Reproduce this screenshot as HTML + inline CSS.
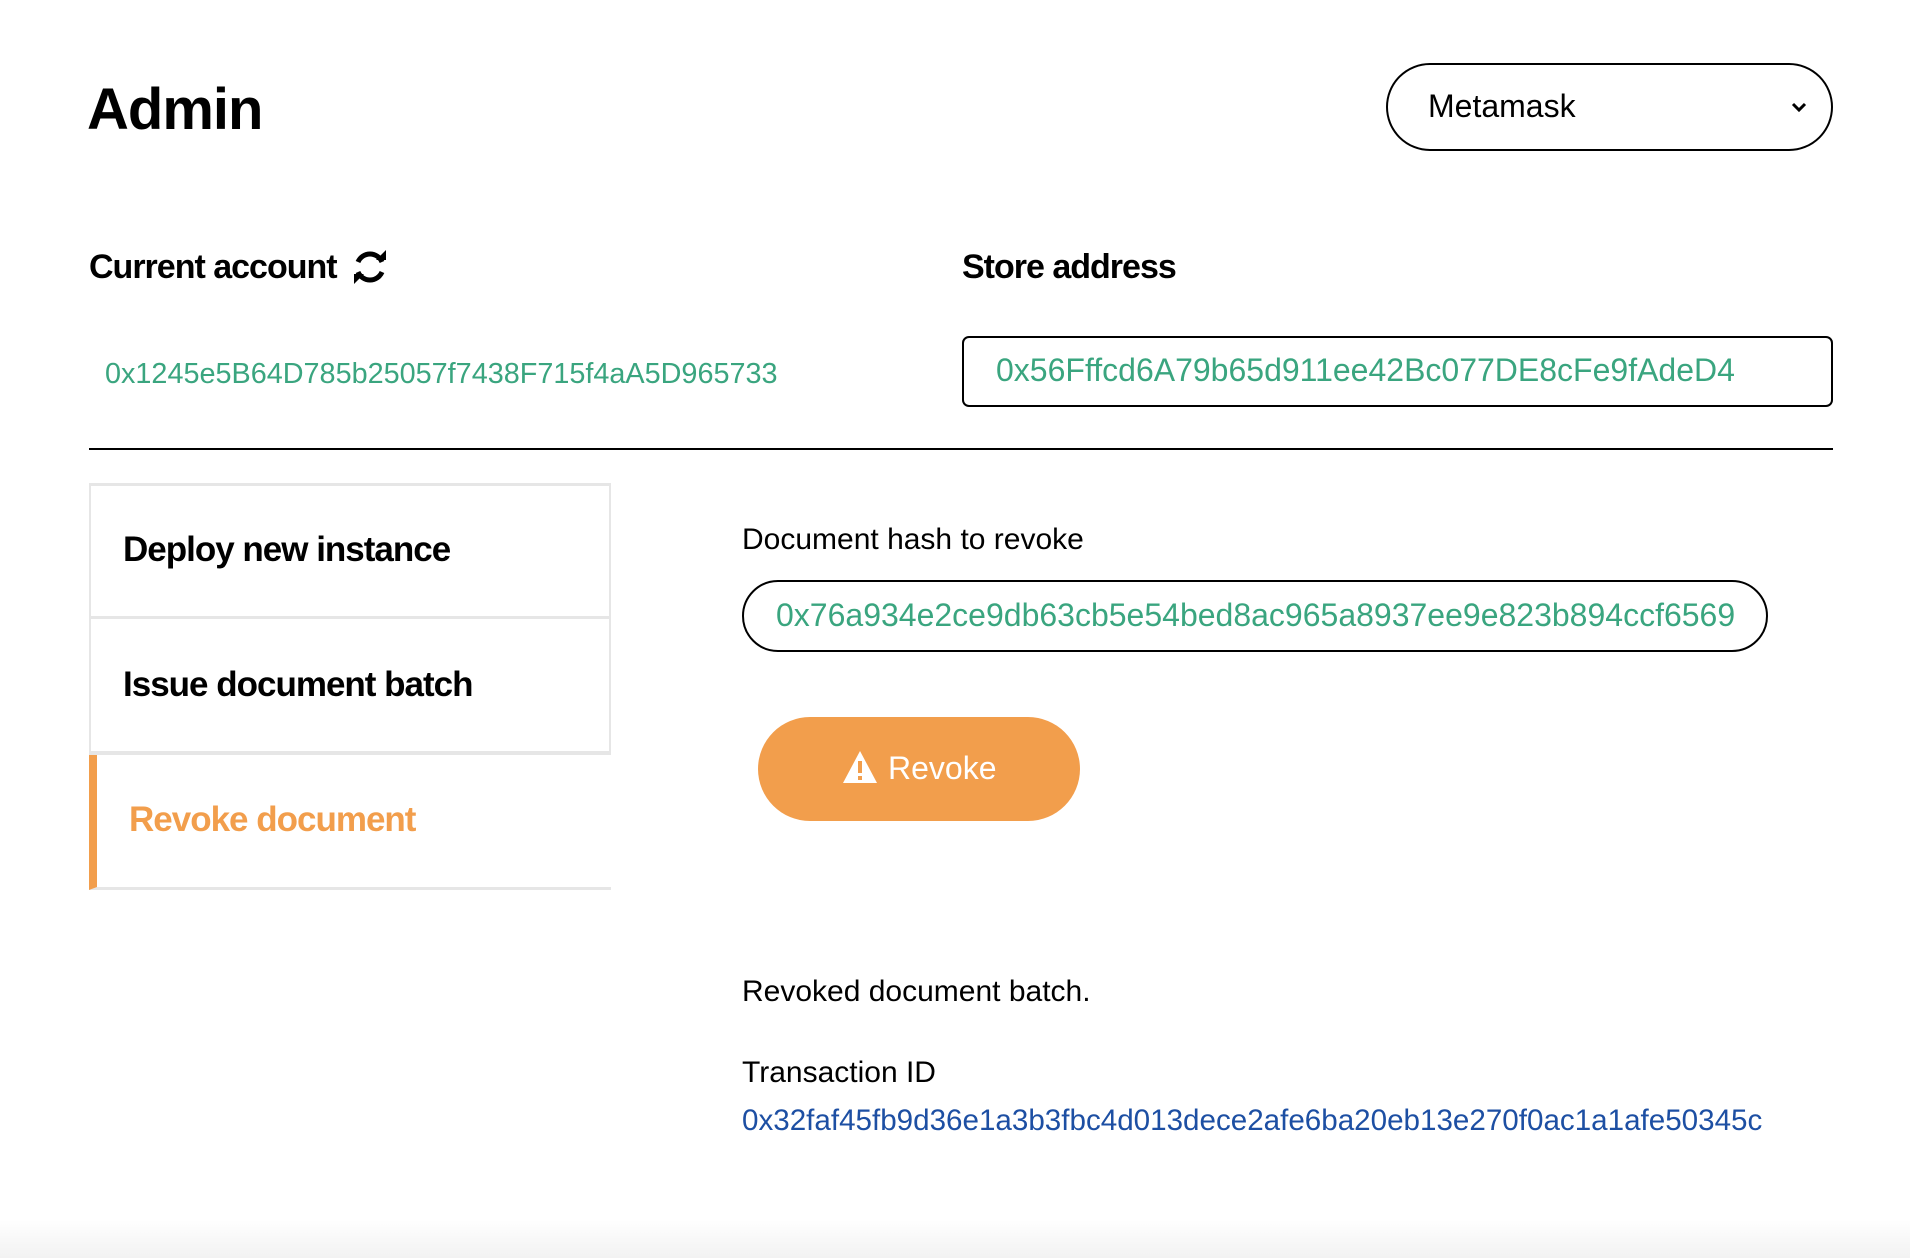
<!DOCTYPE html>
<html><head><meta charset="utf-8"><style>
*{box-sizing:border-box;margin:0;padding:0}
body{width:1910px;height:1258px;background:#fff;font-family:"Liberation Sans",sans-serif;color:#000;position:relative;overflow:hidden}
.a{position:absolute;white-space:nowrap}
.green{color:#3aa57f}
</style></head><body>
<div class="a" style="left:87px;top:76px;font-size:58px;font-weight:bold;letter-spacing:-1px">Admin</div>
<div class="a" style="left:1386px;top:63px;width:447px;height:88px;border:2px solid #000;border-radius:44px"></div>
<div class="a" style="left:1428px;top:88px;font-size:32px">Metamask</div>
<svg class="a" style="left:1790px;top:98px" width="18" height="18" viewBox="0 0 18 18"><path d="M3 6l6 6 6-6" fill="none" stroke="#000" stroke-width="3"/></svg>

<div class="a" style="left:89px;top:248px;font-size:34px;font-weight:bold;letter-spacing:-1px">Current account</div>
<svg class="a" style="left:350px;top:248px" width="40" height="38" viewBox="0 0 40 38"><path d="M32 14A13 13 0 0 0 8 14" fill="none" stroke="#000" stroke-width="5"/><path d="M26 12h10V2z" fill="#000"/><path d="M8 24a13 13 0 0 0 24 0" fill="none" stroke="#000" stroke-width="5"/><path d="M14 26H4v10z" fill="#000"/></svg>
<div class="a green" style="left:105px;top:358px;font-size:28.8px">0x1245e5B64D785b25057f7438F715f4aA5D965733</div>

<div class="a" style="left:962px;top:248px;font-size:34px;font-weight:bold;letter-spacing:-1px">Store address</div>
<div class="a" style="left:962px;top:336px;width:871px;height:71px;border:2px solid #000;border-radius:7px"></div>
<div class="a green" style="left:996px;top:352px;font-size:32px">0x56Fffcd6A79b65d911ee42Bc077DE8cFe9fAdeD4</div>

<div class="a" style="left:89px;top:448px;width:1744px;height:2px;background:#000"></div>

<div class="a" style="left:89px;top:483px;width:522px;height:136px;border:3px solid #e6e6e6;border-width:3px 2px 3px 2px"></div>
<div class="a" style="left:123px;top:530px;font-size:35px;font-weight:bold;letter-spacing:-1px">Deploy new instance</div>
<div class="a" style="left:89px;top:617px;width:522px;height:138px;border:3px solid #e6e6e6;border-width:0 2px 4px 2px"></div>
<div class="a" style="left:123px;top:665px;font-size:35px;font-weight:bold;letter-spacing:-1px">Issue document batch</div>
<div class="a" style="left:89px;top:755px;width:522px;height:135px;border-bottom:3px solid #e6e6e6;border-left:8px solid #f29e4c"></div>
<div class="a" style="left:129px;top:800px;font-size:35px;font-weight:bold;letter-spacing:-1px;color:#f29e4c">Revoke document</div>

<div class="a" style="left:742px;top:523px;font-size:30px">Document hash to revoke</div>
<div class="a" style="left:742px;top:580px;width:1026px;height:72px;border:2px solid #000;border-radius:36px"></div>
<div class="a green" style="left:776px;top:597px;font-size:32px;width:960px;overflow:hidden">0x76a934e2ce9db63cb5e54bed8ac965a8937ee9e823b894ccf65691</div>
<div class="a" style="left:758px;top:717px;width:322px;height:104px;background:#f29e4c;border-radius:52px"></div>
<svg class="a" style="left:842px;top:750px" width="36" height="34" viewBox="0 0 36 34"><path d="M18 1L35 33H1z" fill="#fff"/><rect x="16" y="11" width="4" height="12" fill="#f29e4c"/><rect x="16" y="26" width="4" height="4" fill="#f29e4c"/></svg>
<div class="a" style="left:888px;top:750px;font-size:32px;color:#fff">Revoke</div>

<div class="a" style="left:742px;top:975px;font-size:30px">Revoked document batch.</div>
<div class="a" style="left:742px;top:1056px;font-size:30px">Transaction ID</div>
<div class="a" style="left:742px;top:1104px;font-size:29.6px;color:#1d4fa3">0x32faf45fb9d36e1a3b3fbc4d013dece2afe6ba20eb13e270f0ac1a1afe50345c</div>
<div class="a" style="left:0;top:1220px;width:1910px;height:38px;background:linear-gradient(#fff,#f2f2f2)"></div>
</body></html>
